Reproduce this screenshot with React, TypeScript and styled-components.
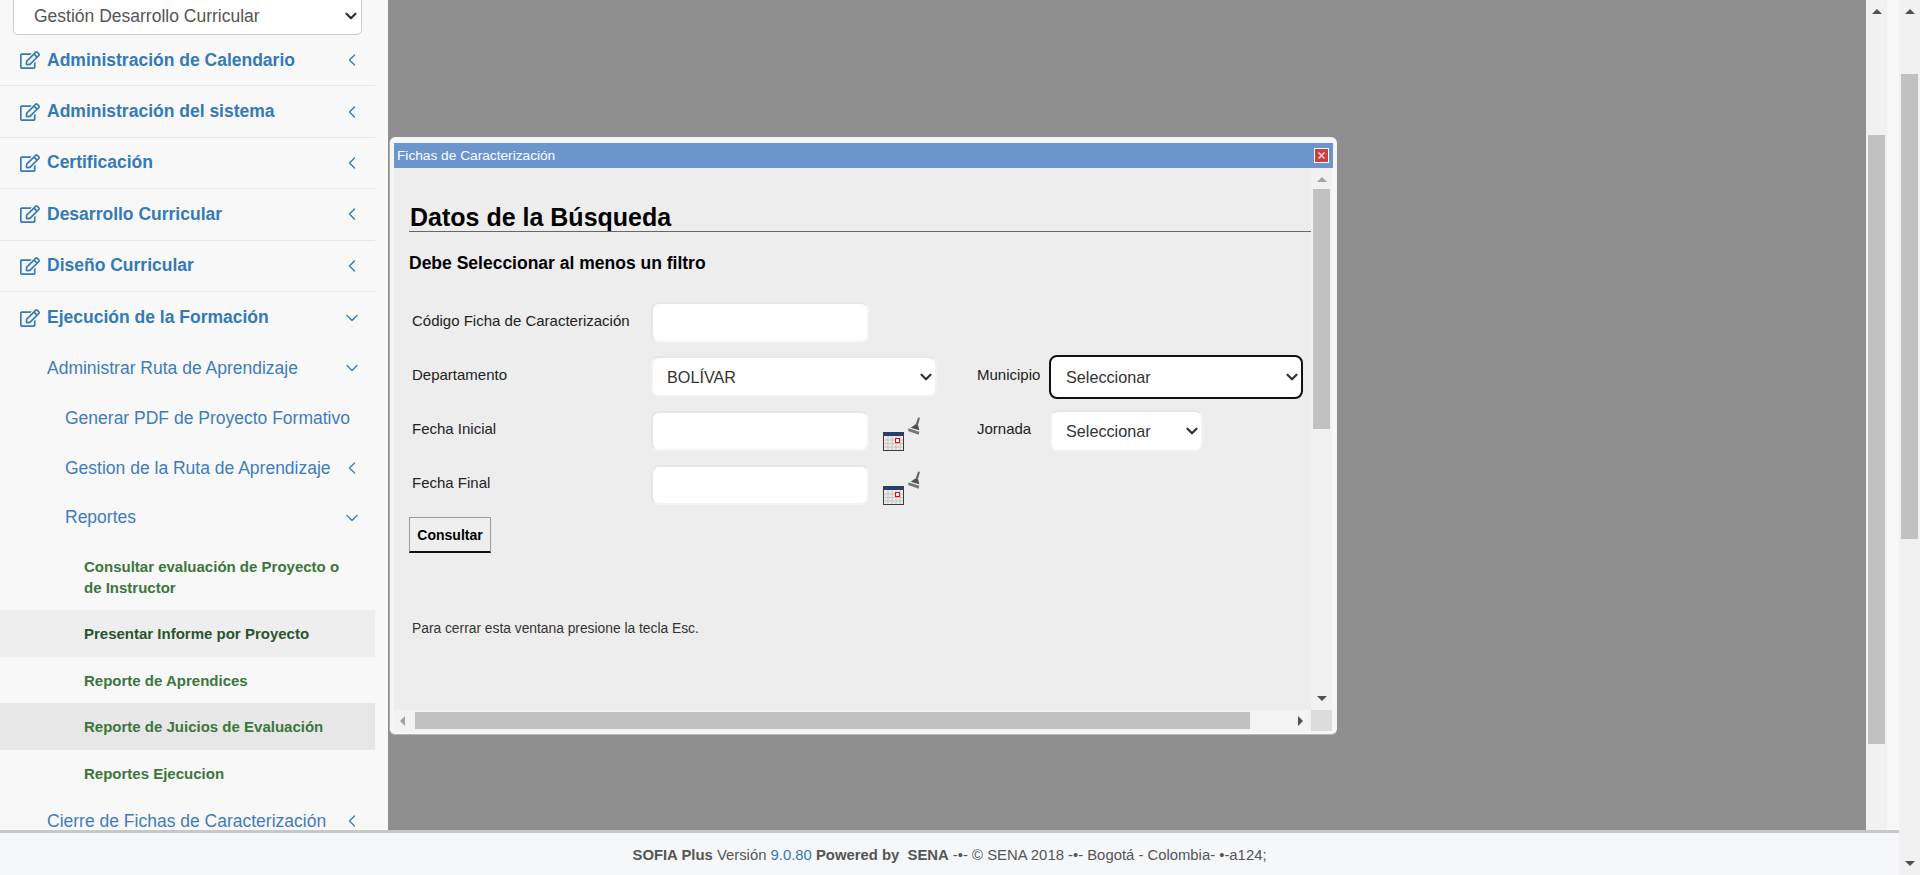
import React from "react";
import styled, { createGlobalStyle } from "styled-components";
import { FaRegEdit } from "react-icons/fa";
import { ChevronDown, ChevronLeft } from "lucide-react";

const GlobalStyle = createGlobalStyle`
  html, body {
    margin: 0;
    height: 875px;
    overflow: hidden;
    font-family: "Liberation Sans", Arial, sans-serif;
  }
`;

const Page = styled.div`
  display: flex;
  height: 875px;
`;

const MainColumn = styled.div`
  flex: 1;
  min-width: 0;
  display: flex;
  flex-direction: column;
`;

const Workspace = styled.div`
  display: flex;
  height: 830px;
  overflow: hidden;
`;

const Sidebar = styled.nav`
  width: 388px;
  flex-shrink: 0;
  background: #f8f8f8;
  overflow: hidden;
`;

const SelectWrap = styled.div<{ $width: number; $height: number; $top?: number; $left?: number }>`
  position: relative;
  width: ${(p) => p.$width}px;
  height: ${(p) => p.$height}px;
  margin: ${(p) => p.$top ?? 0}px 0 0 ${(p) => p.$left ?? 0}px;
  select {
    appearance: none;
    display: block;
    width: 100%;
    height: 100%;
    box-sizing: border-box;
    background: #fff;
  }
  svg {
    position: absolute;
    top: 50%;
    right: 2px;
    transform: translateY(-50%);
    color: #333;
    pointer-events: none;
  }
`;

const AreaSelect = styled.select`
  padding: 0 0 0 20px;
  border: 1px solid #ccc;
  border-radius: 5px;
  color: #555;
  font: 17.5px "Liberation Sans", Arial, sans-serif;
`;

const MenuList = styled.div`
  width: 375px;
`;

const MenuRow = styled.a<{ $level: number; $open?: boolean }>`
  display: flex;
  align-items: center;
  box-sizing: border-box;
  height: ${(p) => (p.$level === 0 ? "51.4px" : "49.9px")};
  padding: 0 13px 0 ${(p) => (p.$level === 0 ? 20 : p.$level === 1 ? 47 : 65)}px;
  border-bottom: ${(p) => (p.$level === 0 && !p.$open ? "1px solid #e7e7e7" : "none")};
  color: ${(p) => (p.$level === 0 ? "#337ab7" : "#3f7cbd")};
  font-size: 17.5px;
  font-weight: ${(p) => (p.$level === 0 ? 700 : 400)};
  svg.lead {
    margin-right: 7px;
    flex-shrink: 0;
  }
`;

const MenuLabel = styled.span`
  flex: 1;
  white-space: nowrap;
`;

const LeafRow = styled.a<{ $bg?: string; $dark?: boolean }>`
  display: block;
  padding: 12.75px 30px 12.75px 84px;
  background: ${(p) => p.$bg ?? "transparent"};
  color: ${(p) => (p.$dark ? "#2b542c" : "#3c763d")};
  font-size: 15px;
  font-weight: 700;
  line-height: 21px;
`;

const Overlay = styled.main`
  flex: 1;
  background: #8f8f8f;
  padding: 137px 0 0 1px;
`;

const Modal = styled.section`
  width: 948px;
  height: 598px;
  box-sizing: border-box;
  display: flex;
  flex-direction: column;
  padding: 6px 4px 4px 4px;
  background: #f6f6f6;
  border-bottom: 1px solid #b5b5b5;
  border-left: 1px solid #aaa;
  border-radius: 6px;
`;

const TitleBar = styled.header`
  flex-shrink: 0;
  height: 25px;
  display: flex;
  align-items: center;
  justify-content: space-between;
  padding: 0 4px 0 3px;
  background: #6a96cd;
  color: #fff;
  font-size: 13.7px;
`;

const CloseButton = styled.button`
  width: 15px;
  height: 15px;
  padding: 0;
  display: flex;
  align-items: center;
  justify-content: center;
  border: 1px solid #fff;
  background: #d23c40;
`;

const ModalBody = styled.div`
  flex: 1;
  min-height: 0;
  display: grid;
  grid-template-columns: 917px 21px;
  grid-template-rows: 542px 21px;
`;

const Content = styled.div`
  background: #ededed;
  padding: 0 0 0 15px;
  overflow: hidden;
`;

const Heading = styled.h2`
  margin: 28px 0 0;
  padding: 5px 0 0 1px;
  height: 36px;
  box-sizing: border-box;
  border-bottom: 1px solid #666;
  color: #000;
  font-size: 25px;
  font-weight: 700;
  line-height: 33px;
`;

const Notice = styled.h3`
  margin: 21px 0 0;
  color: #000;
  font-size: 17.5px;
  font-weight: 700;
  line-height: 20px;
`;

const FormGrid = styled.div`
  display: grid;
  grid-template-columns: 239px 326px 72px 1fr;
  grid-template-rows: 41px 44px 42px 40px;
  row-gap: 12px;
  margin: 29px 0 0 3px;
`;

const FieldLabel = styled.label<{ $top: number }>`
  padding-top: ${(p) => p.$top}px;
  color: #222;
  font-size: 15px;
  line-height: 17px;
  white-space: nowrap;
`;

const TextInput = styled.input<{ $tall?: boolean }>`
  display: block;
  flex-shrink: 0;
  width: 218px;
  height: ${(p) => (p.$tall ? 41 : 40)}px;
  box-sizing: border-box;
  border: 2px solid #e6e6e6;
  border-right-color: #f4f4f4;
  border-bottom-color: #f4f4f4;
  border-radius: 8px;
  background: #fff;
`;

const FieldSelect = styled.select<{ $focused?: boolean; $inset: number }>`
  padding: 0 0 0 ${(p) => p.$inset}px;
  border: ${(p) => (p.$focused ? "2px solid #111" : "2px solid #f2f2f2")};
  border-top-color: ${(p) => (p.$focused ? "#111" : "#e6e6e6")};
  border-radius: 8px;
  color: #333;
  font: 16.2px "Liberation Sans", Arial, sans-serif;
`;

const DateField = styled.div`
  display: flex;
  align-items: flex-start;
`;

const CalendarSlot = styled.span`
  margin: 21px 0 0 14px;
  line-height: 0;
`;

const BroomSlot = styled.span`
  margin: 6px 0 0 4px;
  line-height: 0;
`;

const SubmitButton = styled.button`
  display: block;
  width: 82px;
  height: 36px;
  margin: 12px 0 0;
  padding: 0;
  border: 1px solid #9a9a9a;
  border-bottom: 2px solid #111;
  background: #efefef;
  color: #000;
  font: 700 14px "Liberation Sans", Arial, sans-serif;
`;

const Hint = styled.p`
  margin: 67px 0 0 3px;
  color: #333;
  font-size: 13.8px;
  line-height: 18px;
`;

const VTrack = styled.div`
  display: flex;
  flex-direction: column;
  align-items: center;
  width: 21px;
  flex-shrink: 0;
  background: #f1f1f1;
`;

const HTrack = styled.div`
  display: flex;
  align-items: center;
  background: #f3f3f3;
`;

const Corner = styled.div`
  background: #dcdcdc;
`;

const Arrow = styled.span<{ $dir: "up" | "down" | "left" | "right"; $color?: string; $margin?: string }>`
  flex-shrink: 0;
  width: 0;
  height: 0;
  margin: ${(p) => p.$margin ?? "0"};
  border-style: solid;
  border-color: transparent;
  ${(p) => {
    const c = p.$color ?? "#505050";
    if (p.$dir === "up") return `border-width: 0 5px 5px; border-bottom-color: ${c};`;
    if (p.$dir === "down") return `border-width: 5px 5px 0; border-top-color: ${c};`;
    if (p.$dir === "left") return `border-width: 5px 5px 5px 0; border-right-color: ${c};`;
    return `border-width: 5px 0 5px 5px; border-left-color: ${c};`;
  }}
`;

const VThumb = styled.div<{ $gap: number; $size: number }>`
  width: 17px;
  height: ${(p) => p.$size}px;
  margin-top: ${(p) => p.$gap}px;
  flex-shrink: 0;
  background: #c1c1c1;
`;

const HThumb = styled.div`
  width: 835px;
  height: 17px;
  margin-left: 10px;
  background: #c1c1c1;
`;

const GapStrip = styled.div`
  width: 12px;
  flex-shrink: 0;
  background: #f8f8f8;
`;

const Footer = styled.footer`
  flex: 1;
  box-sizing: border-box;
  border-top: 3px solid #c8c8c8;
  background: #f6f7f9;
  padding-top: 14px;
  color: #555;
  font-size: 14.85px;
  line-height: 17px;
  text-align: center;
  b {
    font-weight: 700;
  }
  span {
    color: #337ab7;
  }
`;

function CalendarIcon() {
  return (
    <svg width="21" height="19" viewBox="0 0 21 19">
      <rect x="0.5" y="0.5" width="20" height="18" fill="#ececec" stroke="#3c3c3c" />
      <rect x="1" y="1" width="19" height="3" fill="#1f3f7f" />
      <path d="M5 4v14M9 4v14M13 4v14M17 4v14M1 8h19M1 11.5h19M1 15h19" stroke="#c4c4c4" />
      <rect x="12.5" y="6.5" width="4" height="4" fill="#fff" stroke="#f00" />
    </svg>
  );
}

function BroomIcon() {
  return (
    <svg width="12" height="18" viewBox="0 0 12 18">
      <path d="M12 .7H10L7.7 7.3 10 8Z" fill="#666" />
      <path d="M7.7 7.3 10 8 11.3 13.3 2.7 10.7Z" fill="#4f4f4f" />
      <path d="M.7 11.3 11.3 14.7 10.7 17.7 0 14Z" fill="#777" />
    </svg>
  );
}

const topMenu = [
  "Administración de Calendario",
  "Administración del sistema",
  "Certificación",
  "Desarrollo Curricular",
  "Diseño Curricular",
];

const Closed = () => <ChevronLeft size={20} strokeWidth={1.6} />;
const Opened = () => <ChevronDown size={20} strokeWidth={1.6} />;
const SelectArrow = () => <ChevronDown size={18} strokeWidth={3} />;

function DateCell() {
  return (
    <DateField>
      <TextInput />
      <CalendarSlot>
        <CalendarIcon />
      </CalendarSlot>
      <BroomSlot>
        <BroomIcon />
      </BroomSlot>
    </DateField>
  );
}

export default function App() {
  return (
    <Page>
      <GlobalStyle />
      <MainColumn>
        <Workspace>
          <Sidebar>
            <SelectWrap $width={349} $height={39} $top={-4} $left={13}>
              <AreaSelect defaultValue="gdc">
                <option value="gdc">Gestión Desarrollo Curricular</option>
              </AreaSelect>
              <SelectArrow />
            </SelectWrap>
            <MenuList>
              {topMenu.map((item) => (
                <MenuRow key={item} $level={0}>
                  <FaRegEdit className="lead" size={20} />
                  <MenuLabel>{item}</MenuLabel>
                  <Closed />
                </MenuRow>
              ))}
              <MenuRow $level={0} $open>
                <FaRegEdit className="lead" size={20} />
                <MenuLabel>Ejecución de la Formación</MenuLabel>
                <Opened />
              </MenuRow>
              <MenuRow $level={1}>
                <MenuLabel>Administrar Ruta de Aprendizaje</MenuLabel>
                <Opened />
              </MenuRow>
              <MenuRow $level={2}>
                <MenuLabel>Generar PDF de Proyecto Formativo</MenuLabel>
              </MenuRow>
              <MenuRow $level={2}>
                <MenuLabel>Gestion de la Ruta de Aprendizaje</MenuLabel>
                <Closed />
              </MenuRow>
              <MenuRow $level={2}>
                <MenuLabel>Reportes</MenuLabel>
                <Opened />
              </MenuRow>
              <LeafRow>Consultar evaluación de Proyecto o de Instructor</LeafRow>
              <LeafRow $bg="#eeeeee" $dark>
                Presentar Informe por Proyecto
              </LeafRow>
              <LeafRow>Reporte de Aprendices</LeafRow>
              <LeafRow $bg="#e7e7e7">Reporte de Juicios de Evaluación</LeafRow>
              <LeafRow>Reportes Ejecucion</LeafRow>
              <MenuRow $level={1}>
                <MenuLabel>Cierre de Fichas de Caracterización</MenuLabel>
                <Closed />
              </MenuRow>
            </MenuList>
          </Sidebar>

          <Overlay>
            <Modal>
              <TitleBar>
                Fichas de Caracterización
                <CloseButton aria-label="Cerrar">
                  <svg width="9" height="9" viewBox="0 0 9 9">
                    <path d="M1.5 1.5 7.5 7.5M7.5 1.5 1.5 7.5" stroke="#f6d5d5" strokeWidth="1.6" />
                  </svg>
                </CloseButton>
              </TitleBar>
              <ModalBody>
                <Content>
                  <Heading>Datos de la Búsqueda</Heading>
                  <Notice>Debe Seleccionar al menos un filtro</Notice>
                  <FormGrid>
                    <FieldLabel $top={10}>Código Ficha de Caracterización</FieldLabel>
                    <TextInput $tall />
                    <span />
                    <span />

                    <FieldLabel $top={11}>Departamento</FieldLabel>
                    <SelectWrap $width={286} $height={41} $top={1}>
                      <FieldSelect $inset={14} defaultValue="bol">
                        <option value="bol">BOLÍVAR</option>
                      </FieldSelect>
                      <SelectArrow />
                    </SelectWrap>
                    <FieldLabel $top={11}>Municipio</FieldLabel>
                    <SelectWrap $width={254} $height={44}>
                      <FieldSelect $inset={15} $focused defaultValue="">
                        <option value="">Seleccionar</option>
                      </FieldSelect>
                      <SelectArrow />
                    </SelectWrap>

                    <FieldLabel $top={9}>Fecha Inicial</FieldLabel>
                    <DateCell />
                    <FieldLabel $top={9}>Jornada</FieldLabel>
                    <SelectWrap $width={153} $height={42} $top={-1} $left={1}>
                      <FieldSelect $inset={14} defaultValue="">
                        <option value="">Seleccionar</option>
                      </FieldSelect>
                      <SelectArrow />
                    </SelectWrap>

                    <FieldLabel $top={9}>Fecha Final</FieldLabel>
                    <DateCell />
                  </FormGrid>
                  <SubmitButton>Consultar</SubmitButton>
                  <Hint>Para cerrar esta ventana presione la tecla Esc.</Hint>
                </Content>
                <VTrack>
                  <Arrow $dir="up" $color="#a3a3a3" $margin="9px 0 0" />
                  <VThumb $gap={7} $size={240} />
                  <Arrow $dir="down" $margin="auto 0 9px" />
                </VTrack>
                <HTrack>
                  <Arrow $dir="left" $color="#a3a3a3" $margin="0 0 0 6px" />
                  <HThumb />
                  <Arrow $dir="right" $margin="0 0 0 48px" />
                </HTrack>
                <Corner />
              </ModalBody>
            </Modal>
          </Overlay>

          <VTrack>
            <Arrow $dir="up" $margin="9px 0 0" />
            <VThumb $gap={121} $size={609} />
          </VTrack>
          <GapStrip />
        </Workspace>
        <Footer>
          <b>SOFIA Plus</b> Versión <span>9.0.80</span> <b>Powered by&nbsp; SENA</b> -•- © SENA 2018
          -•- Bogotá - Colombia- •-a124;
        </Footer>
      </MainColumn>
      <VTrack>
        <Arrow $dir="up" $margin="9px 0 0" />
        <VThumb $gap={60} $size={465} />
        <Arrow $dir="down" $margin="auto 0 9px" />
      </VTrack>
    </Page>
  );
}
